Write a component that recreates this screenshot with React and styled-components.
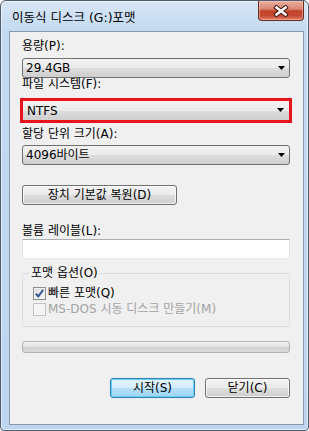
import React from 'react';
import styled, { createGlobalStyle } from 'styled-components';

const Global = createGlobalStyle`
  html, body { margin: 0; padding: 0; background: #ffffff; }
  body {
    width: 309px; height: 431px; overflow: hidden;
    font-family: "DejaVu Sans", "Noto Sans CJK KR", sans-serif;
    font-size: 12px; color: #000;
  }
  * { box-sizing: border-box; }
`;

const Window = styled.div`
  width: 309px;
  height: 431px;
  border: 1px solid #4f5d6e;
  border-radius: 6px 6px 4px 4px;
  background: linear-gradient(#d7e6f6 0px, #c4daf1 30px, #bdd5ef 100%);
  box-shadow: inset 0 0 0 1px rgba(255, 255, 255, 0.55);
  display: flex;
  flex-direction: column;
`;

const TitleBar = styled.div`
  height: 30px;
  flex: none;
  display: flex;
  justify-content: space-between;
  align-items: flex-start;
  padding: 0 4px 0 11px;
`;

const Title = styled.span`
  margin-top: 10px;
  font-size: 12.5px;
  line-height: 14px;
`;

const CloseButton = styled.div`
  width: 46px;
  height: 20px;
  border: 1px solid #6b2a1f;
  border-top: none;
  border-radius: 0 0 4px 4px;
  background: linear-gradient(#eab0a2 0%, #da8571 42%, #c3432c 52%, #c54a31 78%, #e2806a 100%);
  box-shadow: inset 0 0 0 1px rgba(255, 210, 200, 0.45);
  display: flex;
  align-items: center;
  justify-content: center;
`;

const Client = styled.div`
  flex: 1;
  margin: 0 4px 5px 8px;
  border: 1px solid #8a98a9;
  background: #f0f0f0;
  padding: 0 13px 0 12px;
  display: flex;
  flex-direction: column;
`;

const Label = styled.div`
  margin-top: ${(p) => p.$mt}px;
  line-height: 12px;
  height: 12px;
  white-space: nowrap;
`;

const Combo = styled.div`
  margin-top: ${(p) => p.$mt || 0}px;
  height: ${(p) => (p.$bare ? 19 : 20)}px;
  border: ${(p) => (p.$bare ? 'none' : '1px solid #707070')};
  border-radius: ${(p) => (p.$bare ? 0 : 3)}px;
  background: linear-gradient(#f2f2f2 0%, #ebebeb 50%, #dddddd 51%, #cfcfcf 100%);
  display: flex;
  align-items: center;
  padding: 0 ${(p) => (p.$bare ? 5 : 4)}px 0 ${(p) => (p.$bare ? 4 : 3)}px;
  line-height: 14px;
`;

const ComboText = styled.span`
  flex: 1;
  white-space: nowrap;
`;

const RedFrame = styled.div`
  margin: 8px -2px 0;
  border: 3px solid #e8131b;
`;

const PushButton = styled.button`
  margin-top: ${(p) => p.$mt || 0}px;
  width: ${(p) => p.$w}px;
  height: 20px;
  align-self: flex-start;
  padding: 0;
  font: inherit;
  font-size: 12px;
  line-height: 14px;
  color: #000;
  border: 1px solid ${(p) => (p.$default ? '#3c7fb1' : '#707070')};
  border-radius: 3px;
  background: ${(p) =>
    p.$default
      ? 'linear-gradient(#e5f4fc 0%, #d3ecfb 50%, #b5e0f9 51%, #9fd4f3 100%)'
      : 'linear-gradient(#f2f2f2 0%, #ebebeb 50%, #dddddd 51%, #cfcfcf 100%)'};
  box-shadow: ${(p) =>
    p.$default ? 'inset 0 0 0 1px #62d0f5, 0 0 1px #7fd6f7' : 'inset 0 0 0 1px rgba(255,255,255,0.7)'};
`;

const TextInput = styled.div`
  margin-top: 2px;
  height: 20px;
  background: #fff;
  border: 1px solid #dbdfe6;
  border-top-color: #abadb3;
  border-bottom-color: #e3e9ef;
`;

const Group = styled.fieldset`
  margin: 8px 0 0;
  min-width: 0;
  border: 1px solid #d5dfe5;
  border-radius: 3px;
  padding: 8px 10px 10px;
  display: flex;
  flex-direction: column;
  gap: 3px;
`;

const GroupTitle = styled.legend`
  padding: 0 2px;
  margin-left: -4px;
  line-height: 12px;
  font-size: 12px;
`;

const CheckRow = styled.div`
  display: flex;
  align-items: center;
  gap: 2px;
  height: 13px;
  line-height: 13px;
  white-space: nowrap;
  color: ${(p) => (p.$disabled ? '#a3a3a3' : '#000')};
`;

const CheckBox = styled.span`
  width: 13px;
  height: 13px;
  flex: none;
  border: 1px solid ${(p) => (p.$disabled ? '#c2c2c2' : '#8e8f8f')};
  background: ${(p) =>
    p.$disabled ? '#f4f4f4' : 'linear-gradient(135deg, #d8dbe0 0%, #f8f8f8 100%)'};
  box-shadow: inset 0 0 0 1px ${(p) => (p.$disabled ? '#f7f7f7' : '#f2f2f2')};
  display: flex;
  align-items: center;
  justify-content: center;
`;

const Progress = styled.div`
  margin-top: 14px;
  height: 12px;
  border: 1px solid #b2b2b2;
  border-radius: 3px;
  background: linear-gradient(#f3f3f3 0%, #e4e4e4 45%, #d2d2d2 55%, #dcdcdc 100%);
`;

const ButtonRow = styled.div`
  margin-top: 25px;
  display: flex;
  justify-content: flex-end;
  gap: 10px;
`;

const Arrow = () => (
  <svg width="7" height="5" viewBox="0 0 7 5">
    <polygon points="0,0 7,0 3.5,4" fill="#000" />
  </svg>
);

const CloseIcon = () => (
  <svg width="16" height="12" viewBox="-8 -6 16 12">
    <path d="M-4.5 -3.5 L4.5 3.5 M4.5 -3.5 L-4.5 3.5" stroke="#4a1c14" strokeWidth="4.6" strokeLinecap="square" fill="none" />
    <path d="M-4.5 -3.5 L4.5 3.5 M4.5 -3.5 L-4.5 3.5" stroke="#ffffff" strokeWidth="2.4" strokeLinecap="square" fill="none" />
  </svg>
);

const Tick = () => (
  <svg width="11" height="11" viewBox="0 0 11 11">
    <path d="M1.8 5.6 L4.3 8.4 L9.2 1.8" stroke="#3a5795" strokeWidth="2" fill="none" />
  </svg>
);

export default function App() {
  return (
    <>
      <Global />
      <Window>
        <TitleBar>
          <Title>이동식 디스크 (G:)포맷</Title>
          <CloseButton>
            <CloseIcon />
          </CloseButton>
        </TitleBar>
        <Client>
          <Label $mt={8}>용량(P):</Label>
          <Combo $mt={6}>
            <ComboText>29.4GB</ComboText>
            <Arrow />
          </Combo>
          <Label $mt={0}>파일 시스템(F):</Label>
          <RedFrame>
            <Combo $bare>
              <ComboText>NTFS</ComboText>
              <Arrow />
            </Combo>
          </RedFrame>
          <Label $mt={5}>할당 단위 크기(A):</Label>
          <Combo $mt={5}>
            <ComboText>4096바이트</ComboText>
            <Arrow />
          </Combo>
          <PushButton $mt={20} $w={155}>장치 기본값 복원(D)</PushButton>
          <Label $mt={20}>볼륨 레이블(L):</Label>
          <TextInput />
          <Group>
            <GroupTitle>포맷 옵션(O)</GroupTitle>
            <CheckRow>
              <CheckBox>
                <Tick />
              </CheckBox>
              빠른 포맷(Q)
            </CheckRow>
            <CheckRow $disabled>
              <CheckBox $disabled />
              MS-DOS 시동 디스크 만들기(M)
            </CheckRow>
          </Group>
          <Progress />
          <ButtonRow>
            <PushButton $w={85} $default>시작(S)</PushButton>
            <PushButton $w={85}>닫기(C)</PushButton>
          </ButtonRow>
        </Client>
      </Window>
    </>
  );
}
